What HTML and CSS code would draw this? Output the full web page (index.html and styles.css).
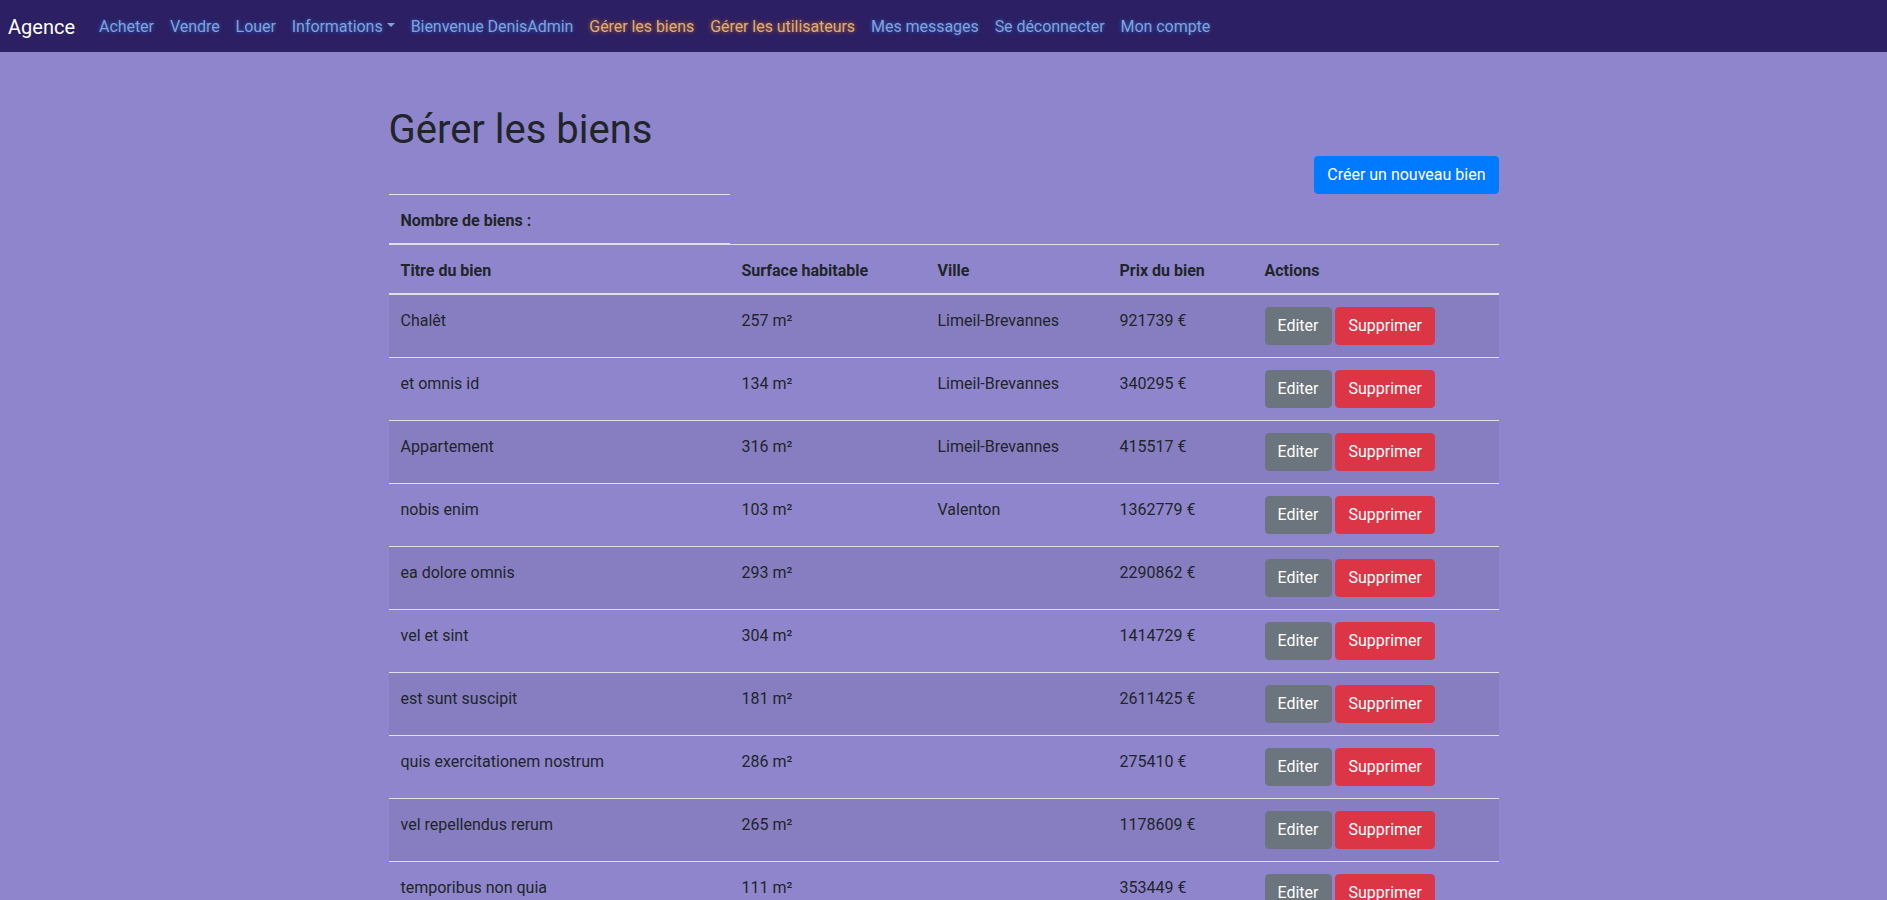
FILE: index.html
```html
<!DOCTYPE html>
<html lang="fr">
<head>
<meta charset="utf-8">
<title>Gérer les biens</title>
<link rel="stylesheet" href="styles.css">
</head>
<body>
<nav class="navbar">
  <a class="brand" href="#">Agence</a>
  <ul class="nav">
    <li><a class="nav-link" href="#">Acheter</a></li>
    <li><a class="nav-link" href="#">Vendre</a></li>
    <li><a class="nav-link" href="#">Louer</a></li>
    <li><a class="nav-link dropdown" href="#">Informations</a></li>
    <li><a class="nav-link" href="#">Bienvenue DenisAdmin</a></li>
    <li><a class="nav-link admin" href="#">Gérer les biens</a></li>
    <li><a class="nav-link admin" href="#">Gérer les utilisateurs</a></li>
    <li><a class="nav-link" href="#">Mes messages</a></li>
    <li><a class="nav-link" href="#">Se déconnecter</a></li>
    <li><a class="nav-link" href="#">Mon compte</a></li>
  </ul>
</nav>
<main class="container">
  <h1 class="title">Gérer les biens</h1>
  <div class="toolbar">
    <a class="btn btn-primary" href="#">Créer un nouveau bien</a>
  </div>
  <table class="table">
    <colgroup>
      <col class="c-title"><col class="c-surface"><col class="c-ville"><col class="c-prix"><col class="c-actions">
    </colgroup>
    <thead>
      <tr><th>Nombre de biens :</th></tr>
      <tr><th>Titre du bien</th><th>Surface habitable</th><th>Ville</th><th>Prix du bien</th><th>Actions</th></tr>
    </thead>
    <tbody>
      <tr><td>Chalêt</td><td>257 m²</td><td>Limeil-Brevannes</td><td>921739 €</td><td class="actions"><a class="btn btn-secondary" href="#">Editer</a> <a class="btn btn-danger" href="#">Supprimer</a></td></tr>
      <tr><td>et omnis id</td><td>134 m²</td><td>Limeil-Brevannes</td><td>340295 €</td><td class="actions"><a class="btn btn-secondary" href="#">Editer</a> <a class="btn btn-danger" href="#">Supprimer</a></td></tr>
      <tr><td>Appartement</td><td>316 m²</td><td>Limeil-Brevannes</td><td>415517 €</td><td class="actions"><a class="btn btn-secondary" href="#">Editer</a> <a class="btn btn-danger" href="#">Supprimer</a></td></tr>
      <tr><td>nobis enim</td><td>103 m²</td><td>Valenton</td><td>1362779 €</td><td class="actions"><a class="btn btn-secondary" href="#">Editer</a> <a class="btn btn-danger" href="#">Supprimer</a></td></tr>
      <tr><td>ea dolore omnis</td><td>293 m²</td><td></td><td>2290862 €</td><td class="actions"><a class="btn btn-secondary" href="#">Editer</a> <a class="btn btn-danger" href="#">Supprimer</a></td></tr>
      <tr><td>vel et sint</td><td>304 m²</td><td></td><td>1414729 €</td><td class="actions"><a class="btn btn-secondary" href="#">Editer</a> <a class="btn btn-danger" href="#">Supprimer</a></td></tr>
      <tr><td>est sunt suscipit</td><td>181 m²</td><td></td><td>2611425 €</td><td class="actions"><a class="btn btn-secondary" href="#">Editer</a> <a class="btn btn-danger" href="#">Supprimer</a></td></tr>
      <tr><td>quis exercitationem nostrum</td><td>286 m²</td><td></td><td>275410 €</td><td class="actions"><a class="btn btn-secondary" href="#">Editer</a> <a class="btn btn-danger" href="#">Supprimer</a></td></tr>
      <tr><td>vel repellendus rerum</td><td>265 m²</td><td></td><td>1178609 €</td><td class="actions"><a class="btn btn-secondary" href="#">Editer</a> <a class="btn btn-danger" href="#">Supprimer</a></td></tr>
      <tr><td>temporibus non quia</td><td>111 m²</td><td></td><td>353449 €</td><td class="actions"><a class="btn btn-secondary" href="#">Editer</a> <a class="btn btn-danger" href="#">Supprimer</a></td></tr>
    </tbody>
  </table>
</main>
</body>
</html>
```
FILE: styles.css
```css
* { box-sizing: border-box; }
html, body { margin: 0; }
body {
  font-family: Roboto, "Liberation Sans", sans-serif;
  font-size: 16px;
  line-height: 1.5;
  color: #212529;
  background: #8f85cc;
}
a { text-decoration: none; }

.navbar {
  display: flex;
  align-items: center;
  height: 52px;
  padding: 1px 8px 0;
  background: #2c1f63;
}
.brand {
  font-size: 20px;
  line-height: 30px;
  color: #fff;
  margin-right: 16px;
}
.nav {
  display: flex;
  list-style: none;
  margin: 0;
  padding: 0;
}
.nav-link {
  display: block;
  padding: 8px;
  letter-spacing: -0.05px;
  color: #86a2d4;
  text-shadow: 0 0 4px rgba(40, 110, 220, 0.9);
}
.nav-link.admin {
  color: #d6b07c;
  text-shadow: 0 0 4px rgba(225, 115, 20, 0.9);
}
.dropdown::after {
  content: "";
  display: inline-block;
  margin-left: 0.255em;
  vertical-align: 0.255em;
  border-top: 0.3em solid;
  border-right: 0.3em solid transparent;
  border-left: 0.3em solid transparent;
}

.container {
  width: 1140px;
  margin: 0 auto;
  padding: 50px 15px 0;
}
.title {
  margin: 0;
  padding: 4px 0 2px;
  font-size: 40px;
  font-weight: 400;
  line-height: 48px;
}
.toolbar {
  display: flex;
  justify-content: flex-end;
}
.btn {
  display: inline-block;
  padding: 6px 12px;
  font-size: 16px;
  line-height: 24px;
  border-radius: 4px;
  color: #fff;
  border: 1px solid transparent;
}
.btn-primary { background: #007bff; border-color: #007bff; }
.btn-secondary { background: #6c757d; border-color: #6c757d; }
.btn-danger { background: #dc3545; border-color: #dc3545; }

.table {
  width: 100%;
  border-collapse: collapse;
  table-layout: fixed;
}
.c-title { width: 341px; }
.c-surface { width: 196px; }
.c-ville { width: 182px; }
.c-prix { width: 145px; }
.c-actions { width: 246px; }
.table th, .table td {
  padding: 14px 12px 10px;
  text-align: left;
  vertical-align: top;
  border-top: 1px solid #dee2e6;
}
.table td.actions { padding: 12px; }
.table th { font-weight: 700; }
.table thead th {
  vertical-align: bottom;
  border-bottom: 2px solid #dee2e6;
}
.table tbody tr:nth-child(odd) { background: rgba(0, 0, 0, 0.05); }
```
